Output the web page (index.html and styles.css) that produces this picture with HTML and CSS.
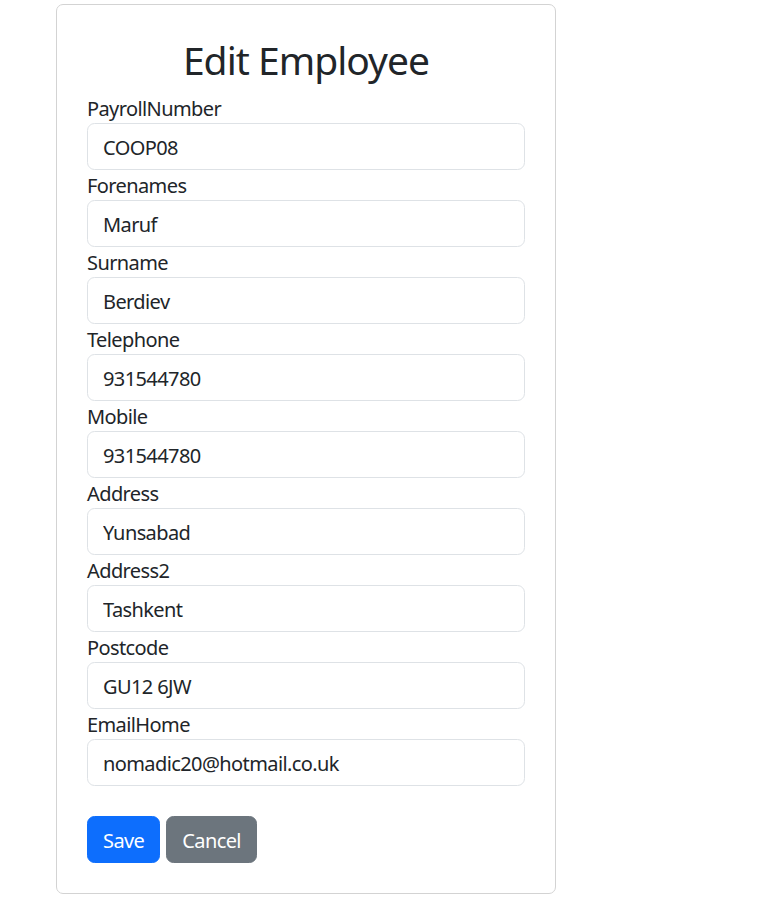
FILE: index.html
```html
<!DOCTYPE html>
<html lang="en">
<head>
<meta charset="utf-8">
<title>Edit Employee</title>
<link rel="stylesheet" href="styles.css">
</head>
<body>
<div class="card">
  <h2 class="title">Edit Employee</h2>
  <form class="form">
    <div class="field">
      <label class="label">PayrollNumber</label>
      <input class="input" type="text" value="COOP08">
    </div>
    <div class="field">
      <label class="label">Forenames</label>
      <input class="input" type="text" value="Maruf">
    </div>
    <div class="field">
      <label class="label">Surname</label>
      <input class="input" type="text" value="Berdiev">
    </div>
    <div class="field">
      <label class="label">Telephone</label>
      <input class="input" type="text" value="931544780">
    </div>
    <div class="field">
      <label class="label">Mobile</label>
      <input class="input" type="text" value="931544780">
    </div>
    <div class="field">
      <label class="label">Address</label>
      <input class="input" type="text" value="Yunsabad">
    </div>
    <div class="field">
      <label class="label">Address2</label>
      <input class="input" type="text" value="Tashkent">
    </div>
    <div class="field">
      <label class="label">Postcode</label>
      <input class="input" type="text" value="GU12 6JW">
    </div>
    <div class="field">
      <label class="label">EmailHome</label>
      <input class="input" type="text" value="nomadic20@hotmail.co.uk">
    </div>
    <div class="actions">
      <button class="btn btn-primary" type="button">Save</button>
      <button class="btn btn-secondary" type="button">Cancel</button>
    </div>
  </form>
</div>
</body>
</html>
```
FILE: styles.css
```css
* { box-sizing: border-box; }
body {
  margin: 0;
  background: #fff;
  color: #212529;
  font-family: "Noto Sans", "Liberation Sans", sans-serif;
  font-size: 20px;
  line-height: 30px;
  letter-spacing: -0.03em;
}
.card {
  width: 500px;
  margin: 4px 0 0 56px;
  padding: 30px;
  border: 1px solid #d3d3d3;
  border-radius: 7px;
}
.title {
  margin: 0 0 10px;
  padding-top: 1px;
  height: 48px;
  font-size: 39px;
  font-weight: 400;
  line-height: 48px;
  letter-spacing: -0.025em;
  text-align: center;
}
.form { margin: 0; }
.field { display: flex; flex-direction: column; }
.label { display: block; height: 30px; padding-top: 1px; }
.input {
  display: block;
  width: 100%;
  height: 47px;
  padding: 8.5px 15px 6.5px;
  border: 1px solid #dee2e6;
  border-radius: 7.5px;
  font: inherit;
  letter-spacing: inherit;
  color: #212529;
  background: #fff;
}
.actions {
  display: flex;
  gap: 6px;
  margin-top: 30px;
}
.btn {
  height: 47px;
  padding: 8.5px 15px 6.5px;
  border: 1px solid transparent;
  border-radius: 7.5px;
  font: inherit;
  letter-spacing: inherit;
  color: #fff;
}
.btn-primary { background: #0d6efd; border-color: #0d6efd; }
.btn-secondary { background: #6c757d; border-color: #6c757d; }
```
